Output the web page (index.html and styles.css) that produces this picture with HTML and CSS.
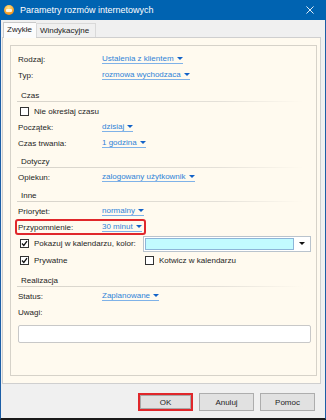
FILE: index.html
```html
<!DOCTYPE html>
<html lang="pl">
<head>
    <meta charset="UTF-8">
    <meta name="viewport" content="width=device-width, initial-scale=1.0">
    <title>Parametry rozmów internetowych</title>
    <link rel="stylesheet" href="styles.css">
</head>
<body>

    <div class="window">
        <div class="titlebar">
            <span class="app-icon"><span class="app-icon-mark"></span></span>
            <span class="title">Parametry rozmów internetowych</span>
            <svg class="close" viewBox="0 0 9 9"><path d="M0.5 0.5 L8.5 8.5 M8.5 0.5 L0.5 8.5" stroke="#fff" stroke-width="1"/></svg>
        </div>

        <div class="tabs">
            <div class="tab tab-active">Zwykłe</div>
            <div class="tab">Windykacyjne</div>
        </div>

        <div class="panel">
            <div class="group">
                <div class="row"><span class="label">Rodzaj:</span><a class="link">Ustalenia z klientem<i class="caret"></i></a></div>
                <div class="row"><span class="label">Typ:</span><a class="link">rozmowa wychodzaca<i class="caret"></i></a></div>

                <div class="section section-first">Czas</div>
                <div class="row"><label class="check"><span class="box"></span>Nie określaj czasu</label></div>
                <div class="row"><span class="label">Początek:</span><a class="link">dzisiaj<i class="caret"></i></a></div>
                <div class="row"><span class="label">Czas trwania:</span><a class="link">1 godzina<i class="caret"></i></a></div>

                <div class="section">Dotyczy</div>
                <div class="row"><span class="label">Opiekun:</span><a class="link">zalogowany użytkownik<i class="caret"></i></a></div>

                <div class="section">Inne</div>
                <div class="row"><span class="label">Priorytet:</span><a class="link">normalny<i class="caret"></i></a></div>
                <div class="row row-marked"><span class="label">Przypomnienie:</span><a class="link">30 minut<i class="caret"></i></a></div>
                <div class="row two-col">
                    <label class="check"><span class="box box-checked"><svg viewBox="0 0 7 7"><path d="M1 3.5 L2.8 5.5 L6 1.2" fill="none" stroke="#111" stroke-width="1.3"/></svg></span>Pokazuj w kalendarzu, kolor:</label>
                    <div class="color-combo">
                        <span class="swatch"></span>
                        <span class="combo-arrow"></span>
                    </div>
                </div>
                <div class="row two-col">
                    <label class="check"><span class="box box-checked"><svg viewBox="0 0 7 7"><path d="M1 3.5 L2.8 5.5 L6 1.2" fill="none" stroke="#111" stroke-width="1.3"/></svg></span>Prywatne</label>
                    <label class="check"><span class="box"></span>Kotwicz w kalendarzu</label>
                </div>

                <div class="section section-last">Realizacja</div>
                <div class="row"><span class="label">Status:</span><a class="link">Zaplanowane<i class="caret"></i></a></div>
                <div class="row"><span class="label">Uwagi:</span></div>
                <div class="notes"></div>
            </div>
        </div>

        <div class="footer">
            <button class="btn btn-ok">OK</button>
            <button class="btn">Anuluj</button>
            <button class="btn">Pomoc</button>
        </div>
    </div>

</body>
</html>
```

FILE: styles.css
```css
body {
    margin: 0;
    font-family: "Liberation Sans", Arial, sans-serif;
    font-size: 8px;
    color: #1e1e1e;
    background-color: #fff;
}

.window {
    width: 326px;
    height: 420px;
    box-sizing: border-box;
    border-left: 1px solid #1c5ea6;
    border-right: 1px solid #1c5ea6;
    border-bottom: 2px solid #1a1a1a;
    background-color: #f0f0f0;
    display: flex;
    flex-direction: column;
}

/* Title bar */
.titlebar {
    height: 20px;
    flex: none;
    margin: 0 -1px;
    padding: 0 12px 0 4px;
    background-color: #0063b1;
    color: #fff;
    font-size: 9px;
    display: flex;
    align-items: center;
}

.app-icon {
    width: 10px;
    height: 10px;
    border-radius: 50%;
    background: radial-gradient(circle at 45% 30%, #ffe58a, #f5a12a 60%, #e07a1c);
    margin-right: 6px;
    display: flex;
    align-items: center;
    justify-content: center;
}

.app-icon-mark {
    width: 6px;
    height: 3px;
    border-radius: 1px;
    background-color: #fff;
    opacity: 0.85;
}

.title {
    flex: 1;
}

.close {
    width: 8px;
    height: 8px;
}

/* Tabs */
.tabs {
    height: 17px;
    flex: none;
    padding-left: 2px;
    display: flex;
    align-items: flex-end;
}

.tab {
    height: 13px;
    line-height: 13px;
    padding: 0 6px 0 3px;
    border: 1px solid #d9d9d9;
    border-bottom: none;
    background-color: #f0f0f0;
    color: #222;
}

.tab-active {
    height: 15px;
    line-height: 14px;
    padding: 0 4px 0 3px;
    margin-bottom: -1px;
    background-color: #fcfcfc;
    border-color: #c9c9c9;
    border-right: none;
    position: relative;
    z-index: 1;
}

/* Tab page */
.panel {
    flex: 1;
    margin: 0 4px 0 1px;
    padding: 7px 4px 7px 7px;
    border: 1px solid #cfcfcf;
    background-color: #fffaef;
    display: flex;
}

.group {
    flex: 1;
    border: 1px solid #d6d2c9;
    padding: 5px 5px 0 7px;
}

.row {
    height: 16px;
    display: flex;
    align-items: center;
    white-space: nowrap;
}

.label {
    width: 84px;
    flex: none;
}

.link {
    color: #2f83d8;
    line-height: 9px;
    border-bottom: 1px solid #7fb2e8;
    display: inline-flex;
    align-items: center;
    cursor: pointer;
}

.caret {
    width: 0;
    height: 0;
    margin-left: 3px;
    border-left: 3px solid transparent;
    border-right: 3px solid transparent;
    border-top: 3px solid #1262c8;
}

.section {
    margin: 5px 8px 1px -1px;
    padding-left: 4px;
    height: 11px;
    line-height: 11px;
    color: #222;
    background: linear-gradient(to right, #d7d3ca, #e4e0d8 70%, rgba(255, 250, 239, 0)) left bottom / 100% 1px no-repeat;
    padding-bottom: 1px;
}

.section-first {
    margin-top: 7px;
}

.section-last {
    margin-top: 6px;
}

/* Checkboxes */
.check {
    display: flex;
    align-items: center;
}

.box {
    width: 7px;
    height: 7px;
    margin: 0 5px 0 2px;
    border: 1px solid #333;
    background-color: #fff;
    display: flex;
}

.box svg {
    width: 7px;
    height: 7px;
}

.two-col {
    height: 17px;
}

.two-col > :first-child {
    width: 125px;
    flex: none;
}

.color-combo {
    width: 164px;
    height: 12px;
    border: 1px solid #b9c3cd;
    background-color: #fff;
    padding: 1px;
    display: flex;
    align-items: center;
}

.swatch {
    flex: 1;
    height: 10px;
    background-color: #c2fbff;
    border: 1px solid #8db5d8;
}

.combo-arrow {
    width: 15px;
    height: 12px;
    display: flex;
    align-items: center;
    justify-content: center;
}

.combo-arrow::after {
    content: "";
    border-left: 3px solid transparent;
    border-right: 3px solid transparent;
    border-top: 3px solid #111;
}

/* Highlight drawn over the reminder row */
.row-marked {
    position: relative;
}

.row-marked::after {
    content: "";
    position: absolute;
    left: -3px;
    top: 0;
    width: 127px;
    height: 12px;
    border: 2px solid #e0272b;
    border-radius: 3px;
}

.notes {
    height: 16px;
    margin-top: 5px;
    border: 1px solid #c8c8c8;
    border-radius: 2px;
    background-color: #fff;
}

/* Footer buttons */
.footer {
    height: 34px;
    flex: none;
    box-sizing: border-box;
    padding: 9px 10px 0 0;
    display: flex;
    justify-content: flex-end;
    align-items: flex-start;
    gap: 6px;
}

.btn {
    width: 55px;
    height: 18px;
    padding: 0;
    font-family: "Liberation Sans", Arial, sans-serif;
    font-size: 8px;
    color: #1e1e1e;
    background-color: #e1e1e1;
    border: 1px solid #adadad;
    cursor: pointer;
}

.btn-ok {
    border: 2px solid #e0272b;
    box-shadow: inset 0 0 0 1px #a8a8a8;
}
```
